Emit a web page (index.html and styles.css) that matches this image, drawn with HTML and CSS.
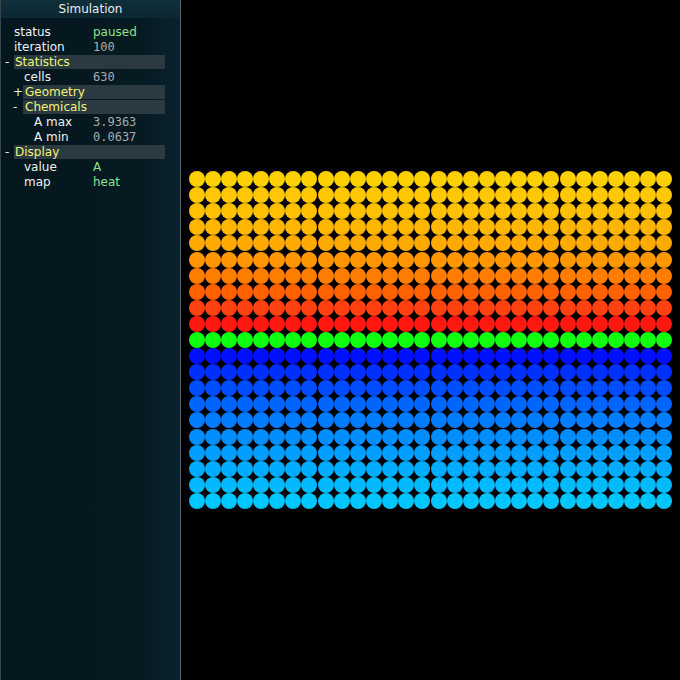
FILE: index.html
```html
<!DOCTYPE html>
<html lang="en">

<head>
	<meta charset="UTF-8">
	<link rel="stylesheet" href="styles.css">

	<script type="text/javascript">
	document.addEventListener("DOMContentLoaded", function() {
		var grid = document.getElementById("cells");

		// heat map colours, one per row (top -> bottom)
		var rows = [
			"#ffd000", "#ffc800", "#ffc000", "#ffb600", "#ffaa00",
			"#ff9600", "#ff7e00", "#ff6000", "#ff4010", "#ff1810",
			"#10ff10",
			"#0010ff", "#0030ff", "#004cff", "#0064ff", "#007cff",
			"#008eff", "#009eff", "#00acff", "#00baff", "#00c6ff"
		];

		for(var r=0; r < rows.length; r++) {
			for(var c=0; c < 30; c++) {
				var cell = document.createElement("div");
				cell.className = "cell";
				cell.style.background = rows[r];
				grid.appendChild(cell);
			}
		}
	});
	</script>
</head>

<body>
	<div class="panel">
		<div class="title">Simulation</div>

		<div class="rows">
			<div class="row"><span class="label">status</span><span class="str">paused</span></div>
			<div class="row"><span class="label">iteration</span><span class="num">100</span></div>

			<div class="folder"><span class="toggle">-</span><span class="name">Statistics</span></div>
			<div class="sub">
				<div class="row"><span class="label">cells</span><span class="num">630</span></div>

				<div class="folder"><span class="toggle">+</span><span class="name">Geometry</span></div>

				<div class="folder"><span class="toggle">-</span><span class="name">Chemicals</span></div>
				<div class="sub">
					<div class="row"><span class="label">A max</span><span class="num">3.9363</span></div>
					<div class="row"><span class="label">A min</span><span class="num">0.0637</span></div>
				</div>
			</div>

			<div class="folder"><span class="toggle">-</span><span class="name">Display</span></div>
			<div class="sub">
				<div class="row"><span class="label">value</span><span class="str">A</span></div>
				<div class="row"><span class="label">map</span><span class="str">heat</span></div>
			</div>
		</div>
	</div>

	<div class="view">
		<div id="cells" class="grid"></div>
	</div>
</body>

</html>
```

FILE: styles.css
```css
* {
	margin  : 0;
	padding : 0;
	box-sizing: border-box;
}

body {
	width  : 680px;
	height : 680px;
	display: flex;
	background: #000;
	font-family: "DejaVu Sans", sans-serif;
	font-size: 12px;
	overflow: hidden;
}

/* side panel */
.panel {
	width  : 181px;
	height : 680px;
	border-left : solid 1px #3a4448;
	border-right: solid 1px #59636a;
	background: linear-gradient(90deg, #04161e 0%, #061a22 80%, #0a2230 100%);
}

.title {
	height : 18px;
	line-height: 18px;
	text-align: center;
	color: #e8eef0;
	background: linear-gradient(180deg, #10303c 0%, #0b2630 100%);
	border-bottom: solid 1px #0e2a34;
}

.rows {
	padding-top: 7px;
}

.row {
	display: flex;
	height : 15px;
	line-height: 15px;
	padding-left: 13px;
	color: #eef2f2;
}
.label {
	width: 79px;
	flex-shrink: 0;
}
.sub .label {
	width: 69px;
}
.sub .sub .label {
	width: 59px;
}
.num {
	font-family: "DejaVu Sans Mono", monospace;
	color: #a8acae;
}
.str {
	color: #8ee08e;
}

.folder {
	display: flex;
	height : 15px;
	line-height: 14px;
	color: #f2f27a;
}
.toggle {
	width: 13px;
	padding-left: 4px;
	color: #e8eef0;
}
.name {
	width : 151px;
	height: 14px;
	padding-left: 1px;
	background: #2a3a40;
}

.sub .folder {
	padding-left: 8px;
}
.sub .folder .toggle {
	width: 14px;
}
.sub .folder .name {
	width : 142px;
	padding-left: 2px;
}
.sub .row {
	padding-left: 23px;
}
.sub .sub .row {
	padding-left: 33px;
}

/* canvas */
.view {
	flex: 1;
	display: flex;
	align-items: center;
	justify-content: center;
}

.grid {
	width  : 484px;
	height : 338px;
	display: grid;
	grid-template-columns: repeat(30, 1fr);
	grid-template-rows   : repeat(21, 1fr);
	place-items: center;
}
.cell {
	width  : 16px;
	height : 16px;
	border-radius: 50%;
}
```
